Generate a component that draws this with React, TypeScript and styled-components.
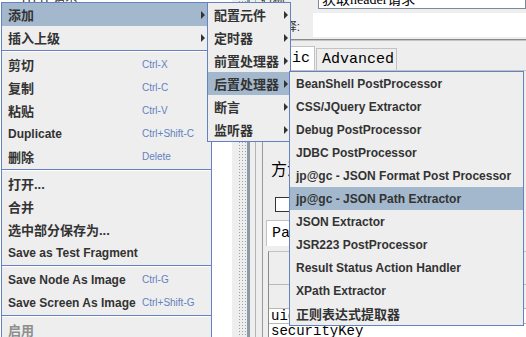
import React from 'react';
import styled, {createGlobalStyle} from 'styled-components';

const MENU_FONT = `"Liberation Sans", "Noto Sans CJK SC", Arial, sans-serif`;
const MONO_FONT = `"Liberation Mono", "Noto Sans CJK SC", monospace`;

const GlobalStyle = createGlobalStyle`
  html, body {
    margin: 0;
    padding: 0;
    background: #eeeeee;
  }
`;

const Screen = styled.div`
  position: relative;
  width: 526px;
  height: 337px;
  overflow: hidden;
  display: flex;
  background: #eeeeee;
`;

/* ---------- window behind the popup ---------- */

const TreePane = styled.div`
  width: 232px;
  flex: none;
  background: #ffffff;
`;

const TreeNode = styled.div`
  margin-top: -12px;
  height: 14px;
  padding-left: 22px;
  font: 12px ${MENU_FONT};
  color: #333333;
`;

const Strip = styled.div<{$w: number; $bg?: string; $dotted?: boolean; $line?: string}>`
  width: ${p => p.$w}px;
  flex: none;
  background-color: ${p => p.$bg || '#eeeeee'};
  background-image: ${p =>
    p.$dotted ? 'radial-gradient(circle, #9aa3ad 0.7px, transparent 0.9px)' : 'none'};
  background-size: 3px 3px;
  border-right: ${p => (p.$line ? `1px solid ${p.$line}` : 'none')};
`;

const RightPane = styled.div`
  flex: 1;
  min-width: 0;
  display: flex;
  flex-direction: column;
  border-left: 1px solid #9a9a9a;
`;

const FieldRow = styled.div<{$label: number; $top: number; $h: number}>`
  display: grid;
  grid-template-columns: ${p => p.$label}px 1fr;
  margin-top: ${p => p.$top}px;
  height: ${p => p.$h}px;
  flex: none;
`;

const FieldLabel = styled.div<{$pr: number}>`
  display: flex;
  align-items: center;
  justify-content: flex-end;
  padding-right: ${p => p.$pr}px;
  font: 12px ${MENU_FONT};
  color: #333333;
  white-space: nowrap;
`;

const TextField = styled.div<{$bordered?: boolean}>`
  background: #ffffff;
  border: ${p => (p.$bordered ? '1px solid #7a8a99' : 'none')};
  display: flex;
  align-items: center;
  padding-left: 3px;
  font: 14px "Liberation Serif", "Noto Sans CJK SC", serif;
  color: #000000;
  white-space: nowrap;
`;

const Divider = styled.div`
  margin-top: 2px;
  height: 0;
  border-top: 1px solid #8a8a8a;
  border-bottom: 1px solid #c4c4c4;
  flex: none;
`;

const TabStrip = styled.div`
  display: flex;
  align-items: flex-end;
  margin-top: 5px;
  height: 24px;
  flex: none;
`;

const Tab = styled.div<{$selected?: boolean; $pl: number; $pr: number}>`
  height: ${p => (p.$selected ? 24 : 22)}px;
  box-sizing: border-box;
  padding: 0 ${p => p.$pr}px 0 ${p => p.$pl}px;
  display: flex;
  align-items: center;
  background: ${p => (p.$selected ? '#ffffff' : '#eeeeee')};
  border: 1px solid #c2c2c2;
  border-bottom: none;
  margin-right: 1px;
  font: 15px ${MONO_FONT};
  color: #000000;
`;

const TabBody = styled.div`
  flex: 1;
  display: flex;
  flex-direction: column;
  border-top: 1px solid #c2c2c2;
  padding-left: 3px;
`;

const MethodLabel = styled.div`
  margin-top: 88px;
  height: 18px;
  padding-left: 5px;
  font: 16px "Noto Sans CJK SC", serif;
  line-height: 18px;
  color: #000000;
`;

const SmallBox = styled.div`
  margin: 20px 0 0 9px;
  width: 220px;
  height: 13px;
  background: #ffffff;
  border: 1px solid #333333;
`;

const InnerTab = styled.div`
  margin-top: 8px;
  width: 110px;
  height: 25px;
  display: flex;
  align-items: center;
  padding-left: 5px;
  background: #ffffff;
  border: 1px solid #c2c2c2;
  border-bottom: none;
  font: 15px ${MONO_FONT};
  color: #000000;
`;

const TableBox = styled.div`
  margin: 5px 0 0 2px;
  flex: 1;
  border-left: 1px solid #8a8a8a;
  border-top: 1px solid #c2c2c2;
  display: flex;
  flex-direction: column;
`;

const TableRow = styled.div<{$h: number; $white?: boolean}>`
  height: ${p => p.$h}px;
  flex: none;
  box-sizing: border-box;
  border-bottom: 1px solid #b8b8b8;
  background: ${p => (p.$white ? '#ffffff' : '#eeeeee')};
  display: flex;
  align-items: center;
  padding-left: 2px;
  font: 14px ${MONO_FONT};
  color: #000000;
`;

/* ---------- popup menus ---------- */

const Popup = styled.div<{$left: number; $top: number; $width: number}>`
  position: absolute;
  left: ${p => p.$left}px;
  top: ${p => p.$top}px;
  width: ${p => p.$width}px;
  box-sizing: border-box;
  border: 1px solid #6382bf;
  background: #eeeeee;
  display: flex;
  flex-direction: column;
`;

const Item = styled.div<{$active?: boolean; $disabled?: boolean; $pr: number}>`
  height: 23px;
  flex: none;
  display: flex;
  align-items: center;
  padding: 0 ${p => p.$pr}px 0 6px;
  background: ${p => (p.$active ? '#a3b8cc' : 'transparent')};
  color: ${p => (p.$disabled ? '#8e8e8e' : '#333333')};
  font: bold 12px ${MENU_FONT};
  white-space: nowrap;
`;

const Label = styled.span<{$cjk?: boolean; $w?: number}>`
  font-size: ${p => (p.$cjk ? 13 : 12)}px;
  width: ${p => (p.$w ? `${p.$w}px` : 'auto')};
  flex: none;
`;

const Shortcut = styled.span`
  font: 10px ${MENU_FONT};
  color: #6382bf;
`;

const Arrow = styled.span`
  margin-left: auto;
  width: 0;
  height: 0;
  border-left: 4px solid #333333;
  border-top: 4px solid transparent;
  border-bottom: 4px solid transparent;
`;

const Separator = styled.div`
  height: 0;
  flex: none;
  margin: 1px 0;
  border-top: 1px solid #6382bf;
  border-bottom: 1px solid #ffffff;
`;

type Entry =
  | 'sep'
  | {label: string; key?: string; sub?: boolean; active?: boolean; disabled?: boolean};

const isCjk = (s: string) => /[\u4e00-\u9fff]/.test(s);

const mainMenu: Entry[] = [
  {label: '添加', sub: true, active: true},
  {label: '插入上级', sub: true},
  'sep',
  {label: '剪切', key: 'Ctrl-X'},
  {label: '复制', key: 'Ctrl-C'},
  {label: '粘贴', key: 'Ctrl-V'},
  {label: 'Duplicate', key: 'Ctrl+Shift-C'},
  {label: '删除', key: 'Delete'},
  'sep',
  {label: '打开...'},
  {label: '合并'},
  {label: '选中部分保存为...'},
  {label: 'Save as Test Fragment'},
  'sep',
  {label: 'Save Node As Image', key: 'Ctrl-G'},
  {label: 'Save Screen As Image', key: 'Ctrl+Shift-G'},
  'sep',
  {label: '启用', disabled: true},
  {label: '禁用'},
  {label: '切换', key: 'Ctrl-T'},
];

const addMenu: Entry[] = [
  {label: '配置元件', sub: true},
  {label: '定时器', sub: true},
  {label: '前置处理器', sub: true},
  {label: '后置处理器', sub: true, active: true},
  {label: '断言', sub: true},
  {label: '监听器', sub: true},
];

const postMenu: Entry[] = [
  {label: 'BeanShell PostProcessor'},
  {label: 'CSS/JQuery Extractor'},
  {label: 'Debug PostProcessor'},
  {label: 'JDBC PostProcessor'},
  {label: 'jp@gc - JSON Format Post Processor'},
  {label: 'jp@gc - JSON Path Extractor', active: true},
  {label: 'JSON Extractor'},
  {label: 'JSR223 PostProcessor'},
  {label: 'Result Status Action Handler'},
  {label: 'XPath Extractor'},
  {label: '正则表达式提取器'},
];

const Menu = ({
  entries,
  left,
  top,
  width,
  labelWidth,
  pr,
}: {
  entries: Entry[];
  left: number;
  top: number;
  width: number;
  labelWidth?: number;
  pr: number;
}) => (
  <Popup $left={left} $top={top} $width={width}>
    {entries.map((e, i) =>
      e === 'sep' ? (
        <Separator key={i} />
      ) : (
        <Item key={i} $active={e.active} $disabled={e.disabled} $pr={pr}>
          <Label $cjk={isCjk(e.label)} $w={labelWidth}>
            {e.label}
          </Label>
          {e.key && <Shortcut>{e.key}</Shortcut>}
          {e.sub && <Arrow />}
        </Item>
      )
    )}
  </Popup>
);

const App = () => (
  <>
    <GlobalStyle />
    <Screen>
      <TreePane>
        <TreeNode>HTTP请求</TreeNode>
      </TreePane>
      <Strip $w={6} />
      <Strip $w={9} $dotted />
      <Strip $w={3} $bg="#8c9aa6" />
      <Strip $w={5} $line="#b4b4b4" />
      <Strip $w={6} />
      <RightPane>
        <FieldRow $label={55} $top={-13} $h={22}>
          <FieldLabel $pr={30}>名称:</FieldLabel>
          <TextField $bordered>获取header请求</TextField>
        </FieldRow>
        <FieldRow $label={50} $top={4} $h={24}>
          <FieldLabel $pr={13}>注释:</FieldLabel>
          <TextField />
        </FieldRow>
        <Divider />
        <TabStrip>
          <Tab $selected $pl={1} $pr={4}>
            Basic
          </Tab>
          <Tab $pl={5} $pr={2}>
            Advanced
          </Tab>
        </TabStrip>
        <TabBody>
          <MethodLabel>方法:</MethodLabel>
          <SmallBox />
          <InnerTab>Parameters</InnerTab>
          <TableBox>
            <TableRow $h={33} />
            <TableRow $h={24} />
            <TableRow $h={15} $white>
              uid
            </TableRow>
            <TableRow $h={15} $white>
              securityKey
            </TableRow>
          </TableBox>
        </TabBody>
      </RightPane>

      <Menu entries={mainMenu} left={1} top={2} width={211} labelWidth={134} pr={6} />
      <Menu entries={addMenu} left={207} top={2} width={84} pr={2} />
      <Menu entries={postMenu} left={289} top={71} width={235} pr={6} />
    </Screen>
  </>
);

export default App;
